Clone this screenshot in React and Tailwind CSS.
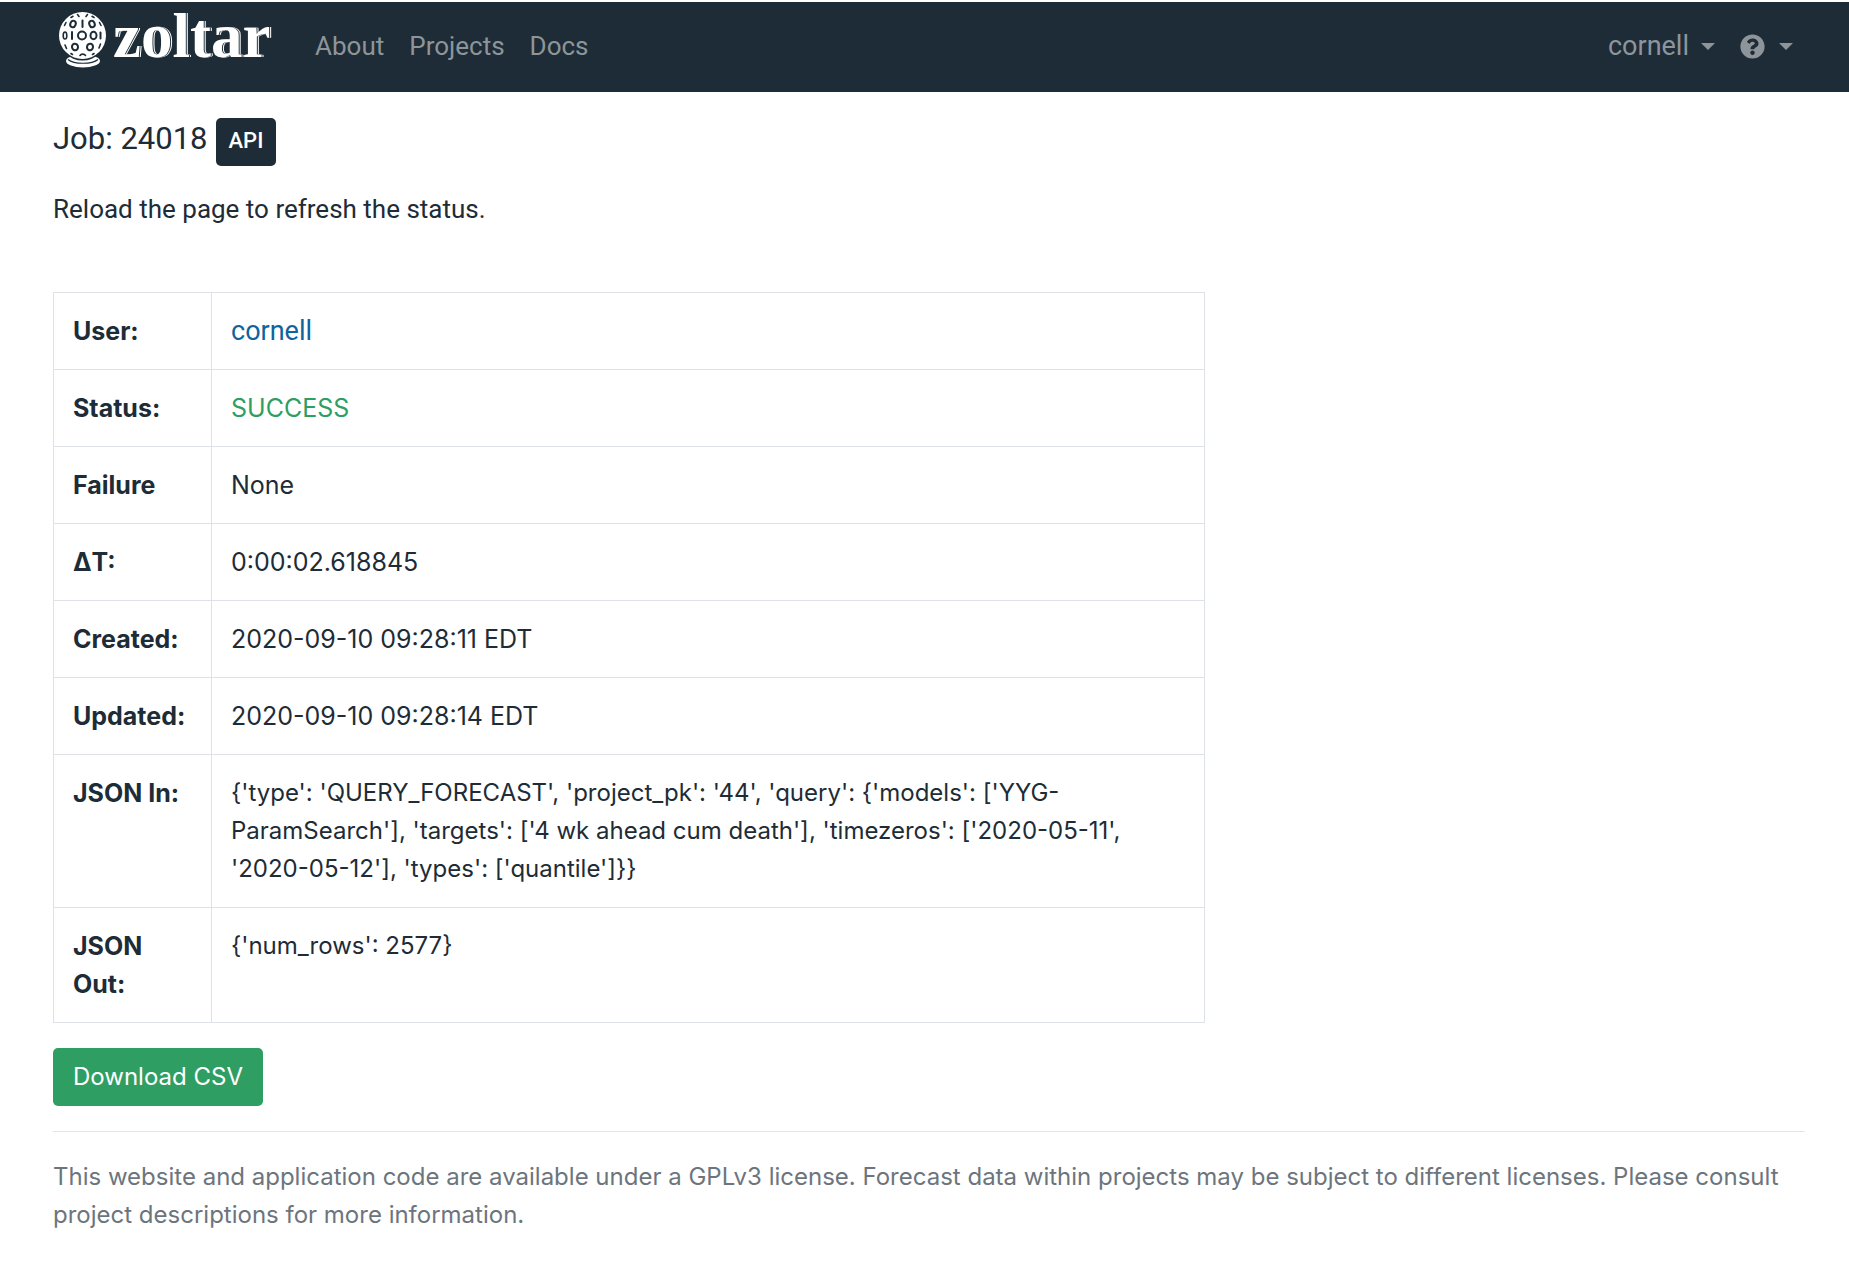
import { FaQuestionCircle } from "react-icons/fa";

const rows = [
  ["User:", <a key="u" href="#cornell" className="font-['Roboto',sans-serif] text-[27px] text-[#0f649e]">cornell</a>],
  ["Status:", <span key="s" className="text-[#2f9e62]">SUCCESS</span>],
  ["Failure", "None"],
  ["ΔT:", "0:00:02.618845"],
  ["Created:", "2020-09-10 09:28:11 EDT"],
  ["Updated:", "2020-09-10 09:28:14 EDT"],
  [
    "JSON In:",
    <span key="in" className="block text-2xl leading-[38px]">
      {"{'type': 'QUERY_FORECAST', 'project_pk': '44', 'query': {'models': ['YYG-ParamSearch'], 'targets': ['4 wk ahead cum death'], 'timezeros': ['2020-05-11', '2020-05-12'], 'types': ['quantile']}}"}
    </span>,
  ],
  ["JSON Out:", <span key="out" className="block text-2xl leading-[38px]">{"{'num_rows': 2577}"}</span>],
];

function Caret() {
  return (
    <svg aria-hidden="true" viewBox="0 0 14 7" className="h-[7px] w-[14px] fill-current">
      <path d="M0 0h14L7 7z" />
    </svg>
  );
}

function CrystalBall() {
  return (
    <svg aria-hidden="true" viewBox="0 0 48 56" className="h-14 w-12 shrink-0">
      <ellipse cx="24" cy="49" rx="17" ry="6.500" fill="#fff" />
      <circle cx="23.500" cy="24" r="24.500" fill="#1d2c36" />
      <circle cx="23.500" cy="23.500" r="23.500" fill="#fff" />
      <path d="M9 47.500c6 5 24 5 30 0" fill="none" stroke="#1d2c36" strokeWidth="1.200" />
      <g fill="none" stroke="#1d2c36" strokeWidth="2" strokeLinecap="round">
        <ellipse cx="14" cy="12" rx="2.700" ry="3.300" transform="rotate(20 14 12)" />
        <path d="M23.500 8.500v6.500" />
        <ellipse cx="33" cy="12" rx="2.700" ry="3.300" transform="rotate(-20 33 12)" />
        <ellipse cx="6" cy="23.500" rx="1.800" ry="3.500" strokeWidth="1.600" />
        <path d="M13 20v7" />
        <ellipse cx="23" cy="23.500" rx="4" ry="4" />
        <ellipse cx="34.500" cy="23.500" rx="3" ry="3.800" />
        <path d="M41.500 20.500v6" />
        <ellipse cx="16" cy="35" rx="3" ry="3.300" transform="rotate(-15 16 35)" />
        <ellipse cx="31" cy="35" rx="3" ry="3.300" transform="rotate(15 31 35)" />
        <path
          d="M7 10.500l-1.500 3M40.500 10.500l1.500 3M6 33l1.500 3.500M41.500 32l-1.500 4M12 5.500l2-1.200M18.500 2.500l1.500 2M27 4.500l1.500-2M33 4.300l2 1.200M21 43.500c1-1.800 4.500-1.800 5.500 0M12 41.500l1.500 1M35 41.500l-1.500 1"
          strokeWidth="1.600"
        />
      </g>
    </svg>
  );
}

export default function App() {
  return (
    <div className="bg-white pt-0.5 font-['Inter',sans-serif] text-[25px] leading-[38px] text-[#1d2c36]">
      <header className="flex h-[90px] items-start justify-between bg-[#1d2c36] pr-14 pl-[59px] font-['Roboto',sans-serif] text-[26px] text-[#8e959a]">
        <div className="flex items-start">
          <a href="#home" className="mt-2.5 flex gap-1.5 text-white">
            <CrystalBall />
            <span className="h-14 w-[160px] font-['Liberation_Serif',serif] text-[63px] leading-[48px] font-bold [text-shadow:1px_0_0_#1d2c36,2px_0_0_#fff]">
              zoltar
            </span>
          </a>
          <nav className="mt-[25px] ml-[42px] flex gap-[25px]">
            <a href="#about">About</a>
            <a href="#projects">Projects</a>
            <a href="#docs">Docs</a>
          </nav>
        </div>
        <div className="mt-[25px] flex gap-[25px]">
          <button type="button" className="flex items-center gap-3 text-[27px]">
            cornell <Caret />
          </button>
          <button type="button" aria-label="Help" className="flex items-center gap-3.5">
            <FaQuestionCircle aria-hidden="true" className="size-[25px]" /> <Caret />
          </button>
        </div>
      </header>

      <main className="pr-11 pl-[53px]">
        <div className="flex items-start gap-2 pt-[26px] font-['Roboto',sans-serif]">
          <h1 className="text-[31px] leading-[42px]">Job: 24018</h1>
          <a href="#api" className="rounded-[5px] bg-[#1d2c36] px-[13px] pt-1 pb-1.5 text-[22px] font-medium text-white">
            API
          </a>
        </div>
        <p className="mt-6 font-['Roboto',sans-serif] text-[26px]">Reload the page to refresh the status.</p>

        <table className="mt-16 w-[66%] max-w-[1152px] table-fixed border-collapse text-left align-top">
          <colgroup>
            <col className="w-[158px]" />
            <col />
          </colgroup>
          <tbody>
            {rows.map(([label, value]) => (
              <tr key={label} className="align-top">
                <th scope="row" className="border border-[#dee2e6] p-[19px] font-bold">{label}</th>
                <td className="border border-[#dee2e6] p-[19px]">{value}</td>
              </tr>
            ))}
          </tbody>
        </table>

        <button type="button" className="mt-[25px] rounded-[5px] bg-[#2f9e62] px-5 py-[10px] text-2xl leading-[38px] text-white">
          Download CSV
        </button>
      </main>

      <footer className="mt-[25px] mr-11 ml-[53px] border-t border-[#e5e5e5] pt-[26px] text-2xl leading-[38px] text-[#6c757d]">
        <p>
          This website and application code are available under a GPLv3 license. Forecast data within projects may be
          subject to different licenses. Please consult project descriptions for more information.
        </p>
      </footer>
    </div>
  );
}
